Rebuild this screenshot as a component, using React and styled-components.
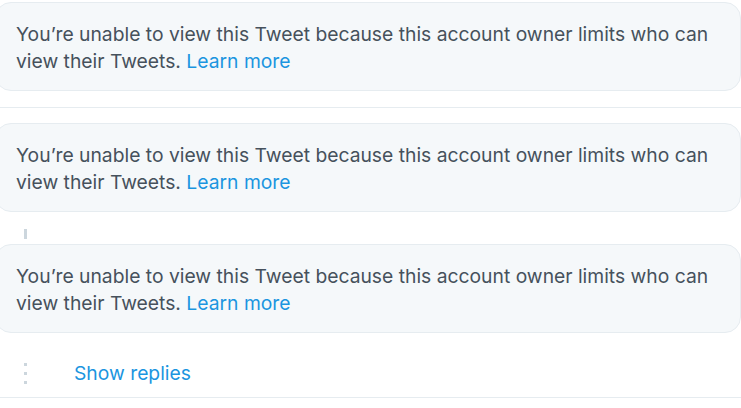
import React from "react";
import styled, { createGlobalStyle } from "styled-components";

const Global = createGlobalStyle`
  html, body { margin: 0; padding: 0; background: #fff; }
  body { font-family: Inter, "Helvetica Neue", Arial, sans-serif; -webkit-font-smoothing: antialiased; }
`;

const Page = styled.div`
  width: 741px;
  height: 408px;
  overflow: hidden;
  padding-top: 2px;
  box-sizing: border-box;
`;

const Notice = styled.div`
  box-sizing: border-box;
  margin-left: -5px;
  width: 746px;
  height: 89px;
  padding: 18px 20px 0 20px;
  background: #f5f8fa;
  border: 1px solid #e6ecf0;
  border-radius: 16px;
  color: #46515c;
  font-size: 19.3px;
  line-height: 27px;
`;

const Link = styled.a`
  color: #1b95e0;
  text-decoration: none;
`;

const Divider = styled.div`
  height: 1px;
  background: #e6ecf0;
  margin: ${(p) => p.$top}px 0 ${(p) => p.$bottom}px;
`;

const Connector = styled.div`
  height: 32px;
  display: flex;
  padding-left: 24px;
  padding-top: 17px;
  box-sizing: border-box;
`;

const ConnectorLine = styled.div`
  width: 3px;
  height: 10px;
  background: #ccd6dd;
`;

const RepliesRow = styled.div`
  height: 65px;
  display: flex;
  align-items: flex-start;
  padding-top: 27px;
  box-sizing: border-box;
  border-bottom: 1px solid #e6ecf0;
`;

const Dots = styled.div`
  width: 74px;
  padding-left: 24px;
  margin-top: 3px;
  box-sizing: border-box;
  display: flex;
  flex-direction: column;
  gap: 6px;
`;

const Dot = styled.span`
  display: block;
  width: 3px;
  height: 3px;
  background: #ccd6dd;
`;

const ShowReplies = styled.a`
  color: #1b95e0;
  font-size: 19.3px;
  line-height: 27px;
  text-decoration: none;
`;

function UnavailableTweet() {
  return (
    <Notice>
      You’re unable to view this Tweet because this account owner limits who can
      view their Tweets. <Link href="#">Learn more</Link>
    </Notice>
  );
}

export default function App() {
  return (
    <>
      <Global />
      <Page>
        <UnavailableTweet />
        <Divider $top={16} $bottom={15} />
        <UnavailableTweet />
        <Connector>
          <ConnectorLine />
        </Connector>
        <UnavailableTweet />
        <RepliesRow>
          <Dots>
            <Dot />
            <Dot />
            <Dot />
          </Dots>
          <ShowReplies href="#">Show replies</ShowReplies>
        </RepliesRow>
      </Page>
    </>
  );
}
